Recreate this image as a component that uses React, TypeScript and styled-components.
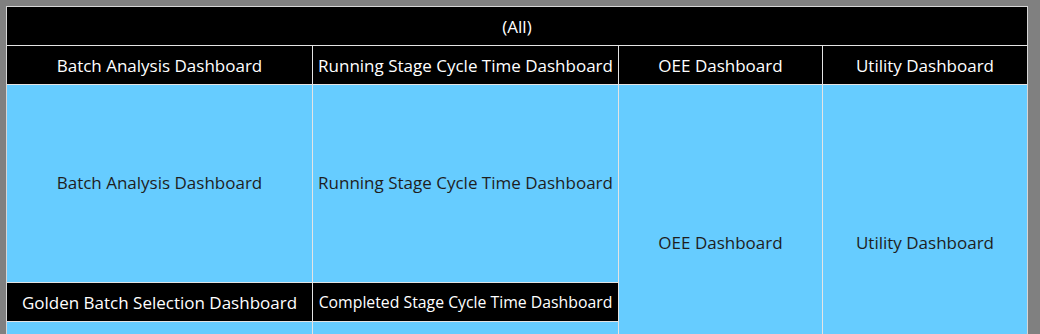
import styled, { createGlobalStyle } from "styled-components";

const GlobalStyle = createGlobalStyle`
  html, body {
    margin: 0;
    padding: 0;
    overflow: hidden;
    background: #808080;
    font-family: "Open Sans", "Noto Sans", sans-serif;
  }
`;

const Page = styled.div`
  padding: 6px 13px 0 6px;
  height: 334px;
  box-sizing: border-box;
  overflow: hidden;
`;

const Board = styled.div`
  display: grid;
  grid-template-columns: 305px 305px 203px 204px;
  grid-template-rows: 38px 38px 197px 38px 80px;
  gap: 1px;
  background: #e4e4e4;
  border: 1px solid #d6d6d6;
  width: fit-content;
`;

const Cell = styled.div<{ $dark?: boolean; $span?: string; $size?: number }>`
  display: flex;
  align-items: center;
  justify-content: center;
  text-align: center;
  white-space: nowrap;
  overflow: hidden;
  padding-bottom: ${(p) => (p.$dark ? 0 : 2)}px;
  background: ${(p) => (p.$dark ? "#000000" : "#66ccff")};
  color: ${(p) => (p.$dark ? "#ffffff" : "#1e1e1e")};
  font-size: ${(p) => p.$size ?? 17}px;
  grid-column: ${(p) => p.$span ?? "auto"};
`;

const Tall = styled(Cell)`
  grid-row: 3 / span 3;
`;

const headers = [
  "Batch Analysis Dashboard",
  "Running Stage Cycle Time Dashboard",
  "OEE Dashboard",
  "Utility Dashboard",
];

const App = () => {
  return (
    <Page>
      <GlobalStyle />
      <Board>
        <Cell $dark $span="1 / span 4">(All)</Cell>

        {headers.map((h) => (
          <Cell $dark key={h}>
            {h}
          </Cell>
        ))}

        <Cell>Batch Analysis Dashboard</Cell>
        <Cell>Running Stage Cycle Time Dashboard</Cell>
        <Tall $span="3">OEE Dashboard</Tall>
        <Tall $span="4">Utility Dashboard</Tall>

        <Cell $dark>Golden Batch Selection Dashboard</Cell>
        <Cell $dark $size={15.8}>
          Completed Stage Cycle Time Dashboard
        </Cell>

        <Cell />
        <Cell />
      </Board>
    </Page>
  );
};

export default App;
